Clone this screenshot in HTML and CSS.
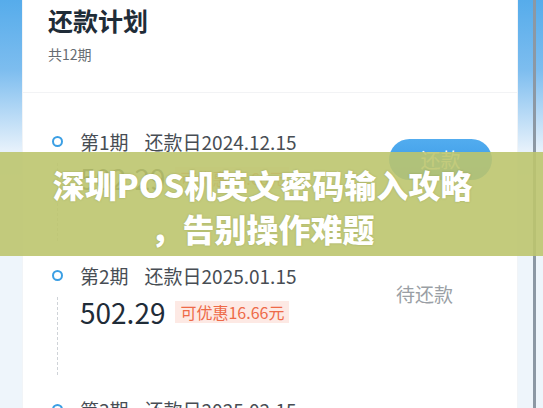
FILE: index.html
```html
<!DOCTYPE html>
<html lang="zh-CN">
<head>
    <meta charset="UTF-8">
    <meta name="viewport" content="width=device-width, initial-scale=1.0">
    <title>还款计划</title>
    <link rel="stylesheet" href="styles.css">
</head>
<body>
    <div class="screen">
        <div class="side side-left"></div>

        <div class="card">
            <div class="card-head">
                <h1>还款计划</h1>
                <p class="count">共12期</p>
            </div>

            <ul class="plan">
                <li class="period">
                    <div class="marker">
                        <span class="dot"></span>
                        <span class="trail"></span>
                    </div>
                    <div class="info">
                        <div class="date">第1期<span class="gap"></span>还款日2024.12.15</div>
                        <div class="money">
                            <span class="amount">502.29</span>
                            <span class="discount">可优惠16.66元</span>
                        </div>
                    </div>
                    <div class="status">
                        <button class="pay">还款</button>
                    </div>
                </li>
                <li class="period">
                    <div class="marker">
                        <span class="dot"></span>
                        <span class="trail"></span>
                    </div>
                    <div class="info">
                        <div class="date">第2期<span class="gap"></span>还款日2025.01.15</div>
                        <div class="money">
                            <span class="amount">502.29</span>
                            <span class="discount">可优惠16.66元</span>
                        </div>
                    </div>
                    <div class="status">
                        <span class="waiting">待还款</span>
                    </div>
                </li>
                <li class="period">
                    <div class="marker">
                        <span class="dot"></span>
                        <span class="trail"></span>
                    </div>
                    <div class="info">
                        <div class="date">第3期<span class="gap"></span>还款日2025.02.15</div>
                    </div>
                    <div class="status"></div>
                </li>
            </ul>
        </div>

        <div class="side side-right">
            <span class="edge"></span>
        </div>

        <div class="banner">
            <span class="banner-line">深圳POS机英文密码输入攻略</span>
            <span class="banner-line">，告别操作难题</span>
        </div>
    </div>
</body>
</html>
```

FILE: styles.css
```css
:root {
    --blue: #3b9fe4;
    --ink: #1f2c38;
    --text: #474d54;
    --muted: #9a9fa5;
    --page: #eef5fb;
}

* {
    box-sizing: border-box;
}

body {
    margin: 0;
    padding: 0;
    font-family: "Noto Sans CJK SC", "Noto Sans", sans-serif;
    background: var(--page);
    overflow: hidden;
}

.screen {
    position: relative;
    display: flex;
    width: 543px;
    height: 408px;
    overflow: hidden;
}

.side {
    height: 100%;
    background: linear-gradient(to bottom, #56aceb 0, #7dbdef 70px, #e6f1fb 150px, var(--page) 180px);
}

.side-left {
    width: 22px;
}

.side-right {
    width: 25px;
    display: flex;
    padding-left: 15px;
}

.edge {
    width: 3px;
    height: 100%;
    background: #8c98a4;
}

.card {
    width: 496px;
    height: 100%;
    background: #fff;
    border-left: 1px solid #f1f4f7;
    border-right: 1px solid #f1f4f7;
}

.card-head {
    padding: 0 0 28px 25px;
    border-bottom: 1px solid #f2f3f5;
}

.card-head h1 {
    margin: 4px 0 0;
    font-size: 25px;
    line-height: 32px;
    font-weight: 700;
    color: var(--ink);
}

.count {
    margin: 8px 0 0;
    font-size: 14px;
    line-height: 20px;
    color: #666c72;
}

.plan {
    list-style: none;
    margin: 0;
    padding: 37px 0 0 29px;
}

.period {
    display: flex;
    height: 134px;
}

.marker {
    width: 10px;
    display: flex;
    flex-direction: column;
    align-items: center;
    padding-bottom: 23px;
}

.dot {
    width: 11px;
    height: 11px;
    margin-top: 6px;
    border: 2.5px solid var(--blue);
    border-radius: 50%;
}

.trail {
    flex: 1;
    margin-top: 16px;
    border-left: 1px dashed #cfd3d8;
}

.info {
    flex: 1;
    padding-left: 18px;
}

.date {
    font-size: 19px;
    line-height: 24px;
    color: var(--text);
}

.gap {
    display: inline-block;
    width: 16px;
}

.money {
    display: flex;
    align-items: center;
    gap: 10px;
    margin-top: 8px;
    height: 32px;
}

.amount {
    font-size: 28px;
    line-height: 32px;
    color: var(--ink);
}

.discount {
    padding: 0 5px;
    font-size: 16px;
    line-height: 22px;
    color: #ee6a48;
    background: #fde9e4;
}

.status {
    width: 103px;
    margin-right: 25px;
    padding-top: 9px;
}

.pay {
    width: 103px;
    height: 41px;
    border: none;
    border-radius: 21px;
    background: linear-gradient(to bottom, #52acef, #3597e6);
    color: #fff;
    font-family: inherit;
    font-size: 20px;
}

.waiting {
    display: block;
    padding: 9px 0 0 7px;
    font-size: 19px;
    line-height: 24px;
    color: var(--muted);
}

.banner {
    position: absolute;
    left: 0;
    top: 152px;
    width: 543px;
    height: 104px;
    padding: 10px 18px 0 0;
    display: flex;
    flex-direction: column;
    align-items: center;
    background: rgba(188, 197, 110, 0.9);
}

.banner-line {
    font-size: 32px;
    line-height: 44px;
    font-weight: 900;
    color: #fff;
    white-space: nowrap;
    text-shadow: 0 0 2px rgba(90, 100, 40, 0.35);
}
```
